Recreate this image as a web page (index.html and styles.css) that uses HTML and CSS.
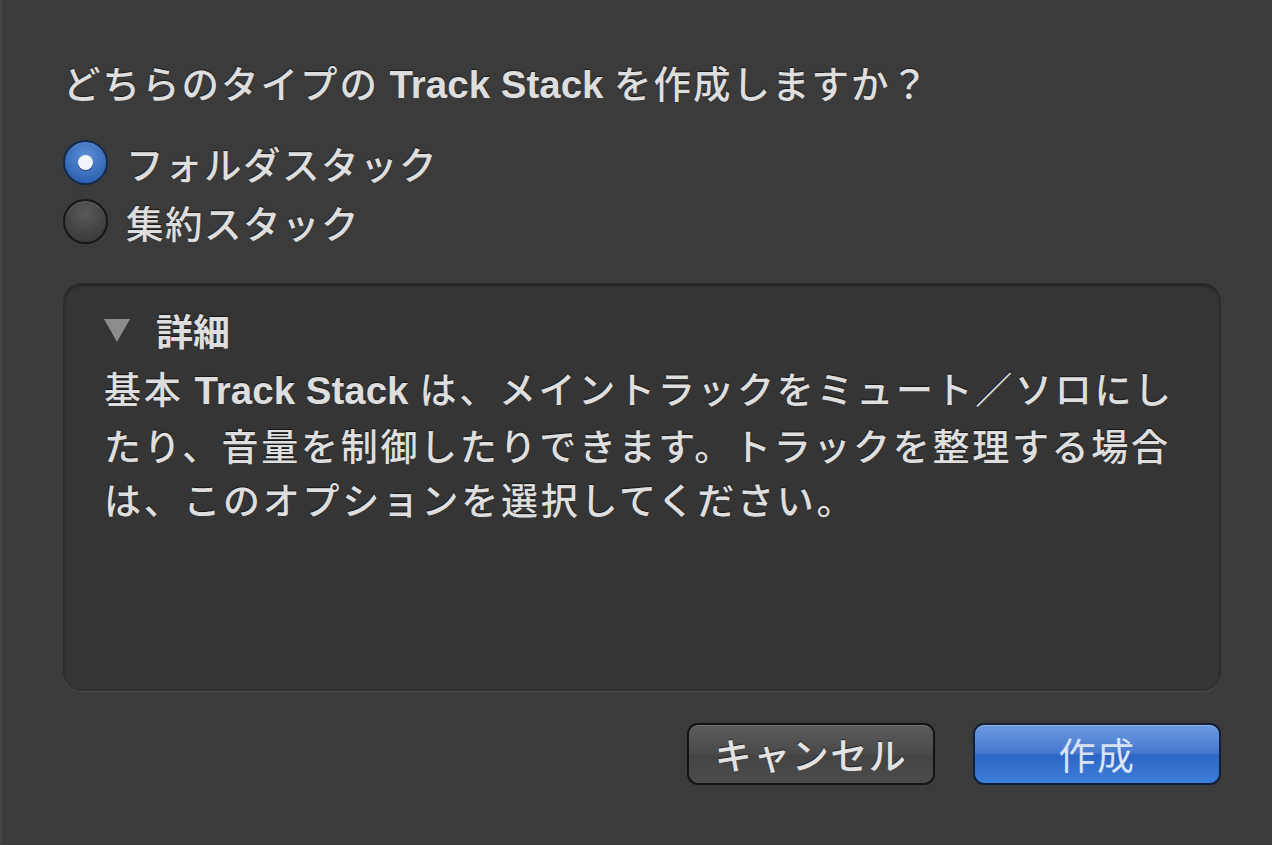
FILE: index.html
```html
<!DOCTYPE html>
<html lang="ja">
  <head>
    <meta charset="UTF-8" />
    <meta name="viewport" content="width=device-width, initial-scale=1.0" />
    <title>Track Stack</title>
    <link rel="stylesheet" href="styles.css">
  </head>
  <body>
    <div class="dialog">
      <h1 class="question">どちらのタイプの <span class="latin">Track Stack</span> を作成しますか？</h1>

      <div class="choices">
        <label class="choice">
          <span class="radio radio-on"><span class="dot"></span></span>
          <span class="choice-text">フォルダスタック</span>
        </label>
        <label class="choice">
          <span class="radio"></span>
          <span class="choice-text">集約スタック</span>
        </label>
      </div>

      <div class="details">
        <div class="details-head">
          <span class="disclosure"></span>
          <span class="details-title">詳細</span>
        </div>
        <p class="details-text">
          基本 <span class="latin">Track Stack</span> は、メイントラックをミュート／ソロにし<br>
          たり、音量を制御したりできます。トラックを整理する場合<br>
          は、このオプションを選択してください。
        </p>
      </div>

      <div class="buttons">
        <button class="btn btn-cancel">キャンセル</button>
        <button class="btn btn-default">作成</button>
      </div>
    </div>
  </body>
</html>
```

FILE: styles.css
```css
body {
  margin: 0;
  padding: 0;
  background: #3b3b3b;
  font-family: "Noto Sans CJK JP", "Liberation Sans", sans-serif;
  color: #dedede;
  overflow: hidden;
}

.dialog {
  box-sizing: border-box;
  width: 1272px;
  height: 845px;
  border-left: 2px solid #444444;
  padding: 52px 51px 0 61px;
  display: flex;
  flex-direction: column;
}

.latin {
  font-family: "Liberation Sans", sans-serif;
  font-weight: bold;
  font-size: 38.5px;
  letter-spacing: 0;
}

.question {
  margin: 0;
  font-size: 37.5px;
  font-weight: 500;
  line-height: 60px;
  letter-spacing: 2px;
  white-space: nowrap;
  text-shadow: 0 -1px 1px rgba(0, 0, 0, 0.6);
}

.choices {
  display: flex;
  flex-direction: column;
  gap: 9px;
  margin-top: 22px;
}

.choice {
  display: flex;
  align-items: center;
  gap: 18px;
  height: 50px;
}

.choice-text {
  font-size: 37.5px;
  font-weight: 500;
  letter-spacing: 1.5px;
  text-shadow: 0 -1px 1px rgba(0, 0, 0, 0.6);
}

.radio {
  box-sizing: border-box;
  width: 45px;
  height: 45px;
  border-radius: 50%;
  border: 2px solid #161616;
  background: radial-gradient(circle at 50% 30%, #5a5a5a, #3e3e3e 70%);
  box-shadow: inset 0 1px 1px rgba(255, 255, 255, 0.15);
  display: flex;
  align-items: center;
  justify-content: center;
}

.radio-on {
  border-color: #132a4e;
  background: radial-gradient(circle at 50% 35%, #5e8fd6, #2f64b4 75%);
}

.dot {
  width: 15px;
  height: 15px;
  border-radius: 50%;
  background: #f3f6fc;
  box-shadow: 0 1px 1px rgba(0, 0, 0, 0.4);
}

.details {
  box-sizing: border-box;
  margin-top: 37px;
  height: 408px;
  background: #353535;
  border-radius: 18px;
  border: 1px solid #2c2c2c;
  box-shadow: inset 0 2px 3px rgba(0, 0, 0, 0.35), 0 1px 0 #4c4c4c;
  padding: 21px 42px 0 40px;
}

.details-head {
  display: flex;
  align-items: center;
  gap: 26px;
  height: 50px;
}

.disclosure {
  width: 0;
  height: 0;
  border-left: 13px solid transparent;
  border-right: 13px solid transparent;
  border-top: 23px solid #8c8c8c;
}

.details-title {
  font-size: 37px;
  font-weight: 700;
  text-shadow: 0 -1px 1px rgba(0, 0, 0, 0.6);
}

.details-text {
  margin: 6px 0 0;
  font-size: 37px;
  font-weight: 500;
  line-height: 54px;
  letter-spacing: 2.7px;
  white-space: nowrap;
  text-shadow: 0 -1px 1px rgba(0, 0, 0, 0.6);
}

.buttons {
  display: flex;
  justify-content: flex-end;
  gap: 38px;
  margin-top: 32px;
}

.btn {
  box-sizing: border-box;
  width: 248px;
  height: 62px;
  border-radius: 11px;
  border: 2px solid #141414;
  font-family: "Noto Sans CJK JP", sans-serif;
  font-size: 37px;
  padding: 0;
  line-height: 56px;
  letter-spacing: 1.5px;
}

.btn-cancel {
  background: linear-gradient(#5c5c5c, #4a4a4a 50%, #444444 52%, #4c4c4c);
  color: #e2e2e2;
  font-weight: 500;
  box-shadow: inset 0 1px 0 rgba(255, 255, 255, 0.15);
  text-shadow: 0 -1px 1px rgba(0, 0, 0, 0.6);
}

.btn-default {
  background: linear-gradient(#6c9ae0, #4679cf 48%, #2d66c4 52%, #3d7ddb);
  color: #d9e3f5;
  font-weight: 400;
  border-color: #10203a;
  box-shadow: inset 0 1px 0 rgba(255, 255, 255, 0.3);
}
```
